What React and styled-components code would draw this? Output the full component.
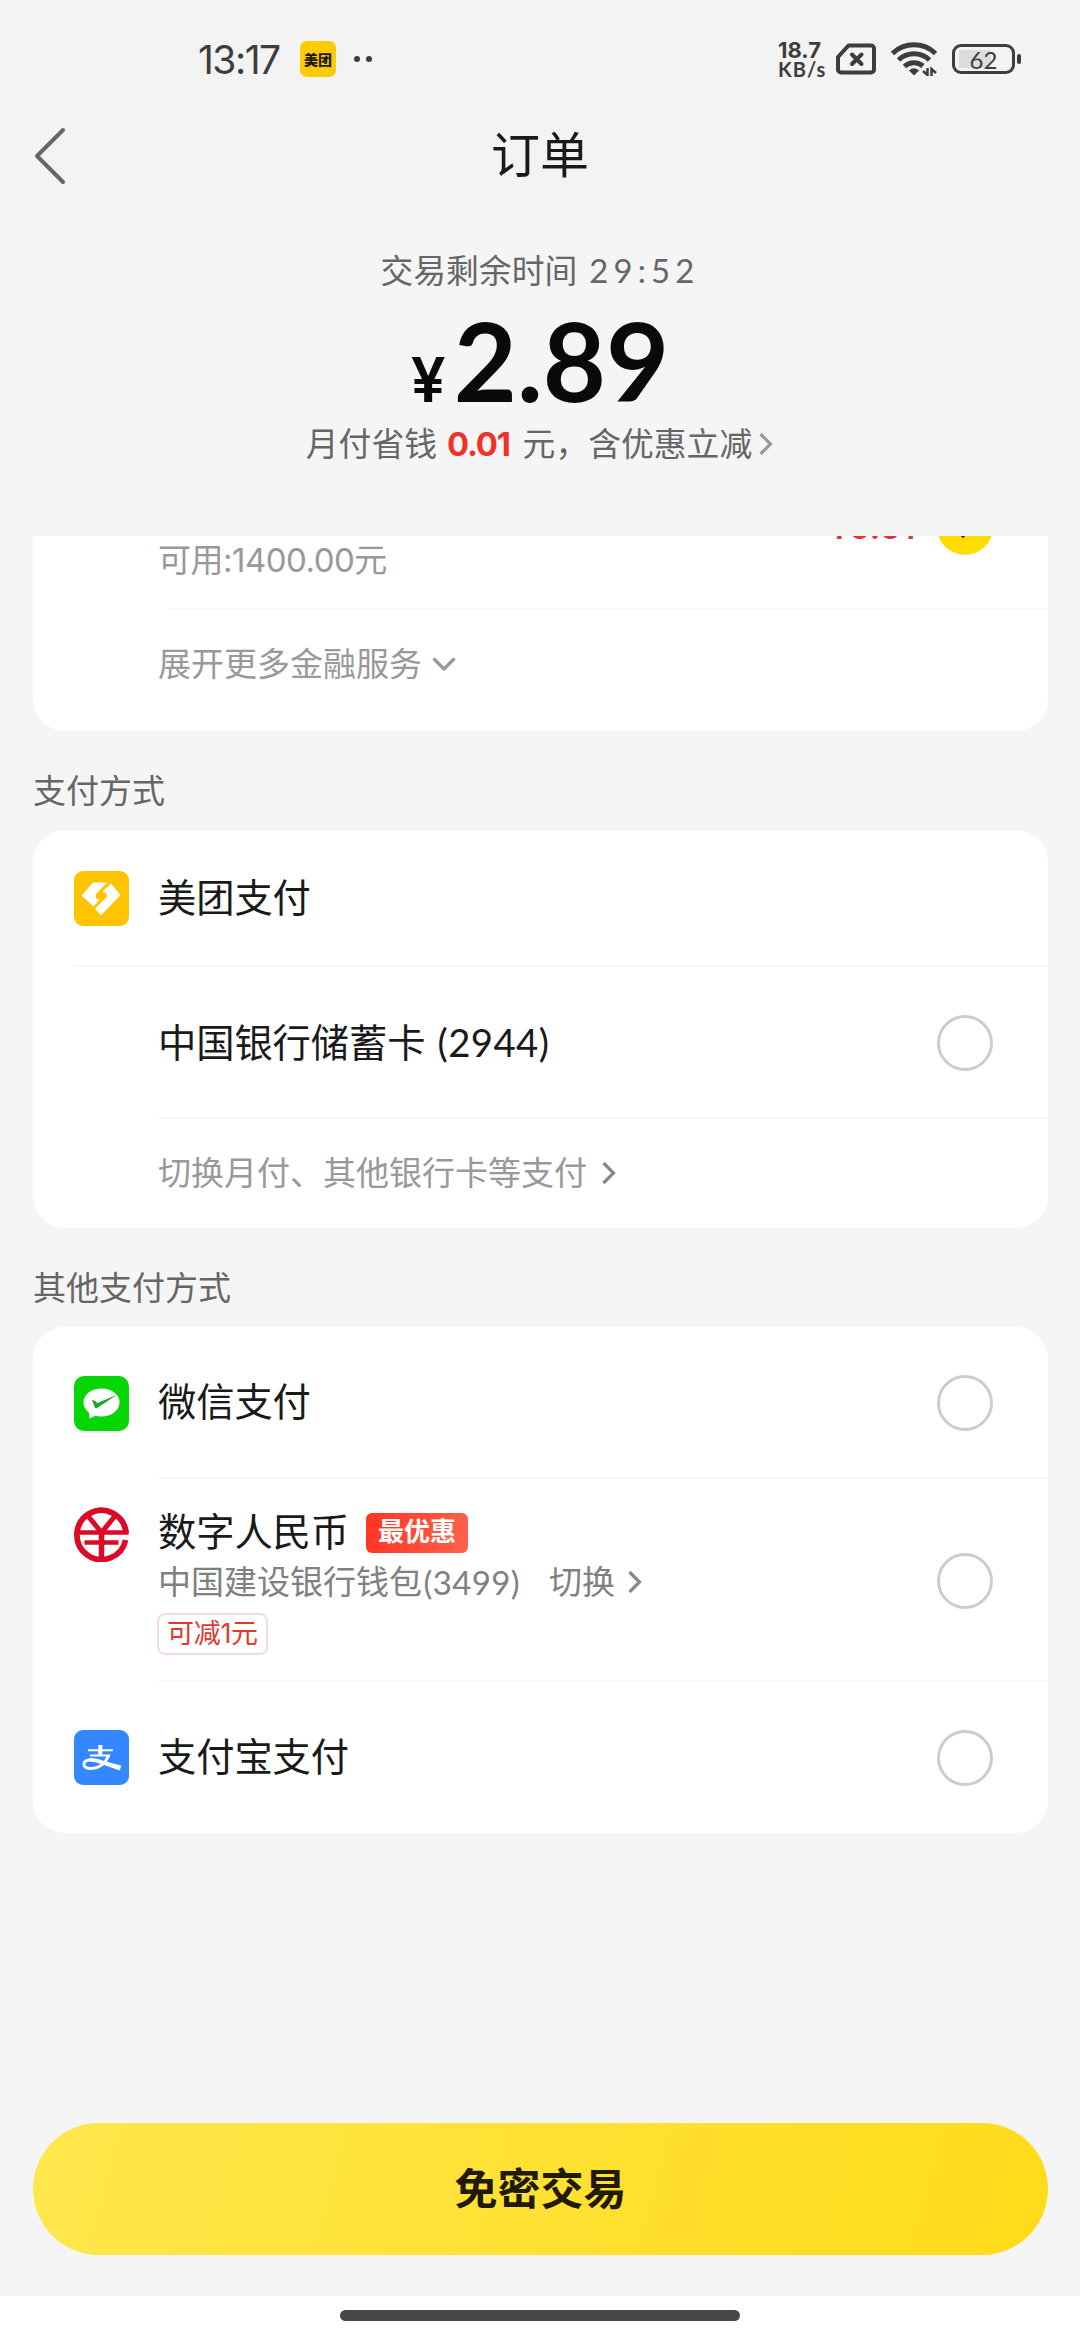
import React, { useState } from 'react';
import styled, { createGlobalStyle, css } from 'styled-components';

const GlobalStyle = createGlobalStyle`
  body {
    margin: 0;
    background: #f5f5f5;
    font-family: Inter, "Noto Sans CJK SC", sans-serif;
    color: #1a1a1a;
  }

  * {
    box-sizing: border-box;
  }
`;

const Page = styled.div`
  display: flex;
  flex-direction: column;
  width: 1080px;
  height: 2340px;
  overflow: hidden;
  white-space: nowrap;
`;

/* ---------- status bar ---------- */

const StatusBar = styled.div`
  display: flex;
  justify-content: space-between;
  align-items: center;
  height: 118px;
  padding: 0 59px 0 198px;
  background: #f3f3f3;
  color: #3d3d3d;
`;

const StatusGroup = styled.div`
  display: flex;
  align-items: center;
`;

const Clock = styled.span`
  width: 102px;
  font-size: 39px;
  letter-spacing: -1.5px;
`;

const AppBadge = styled.span`
  display: flex;
  align-items: center;
  justify-content: center;
  width: 36px;
  height: 36px;
  border-radius: 7px;
  background: #fccb05;
  color: #241a08;
  font-size: 14px;
  font-weight: 900;
`;

const Dot = styled.span`
  width: 6px;
  height: 6px;
  margin-left: ${({ $gap }) => $gap}px;
  border-radius: 50%;
  background: #3d3d3d;
`;

const NetSpeed = styled.div`
  width: 58px;
  padding-top: 1px;
  font-size: 22px;
  font-weight: 700;
  line-height: 19px;
`;

const SpeedUnit = styled.div`
  font-family: Lato, Inter, sans-serif;
  font-size: 20px;
  line-height: 19px;
  letter-spacing: 1px;
`;

const Battery = styled.div`
  display: flex;
  align-items: center;
  justify-content: center;
  width: 63px;
  height: 30px;
  margin-left: 15px;
  border: 3px solid #3d3d3d;
  border-radius: 9px;
  background: linear-gradient(#dcdcdc, #dcdcdc) 4px center / 32px 18px no-repeat;
  font-family: Lato, sans-serif;
  font-size: 24px;
`;

const BatteryTip = styled.span`
  width: 4px;
  height: 10px;
  margin-left: 2px;
  border-radius: 2px;
  background: #3d3d3d;
`;

/* ---------- header ---------- */

const Header = styled.header`
  display: grid;
  grid-template-columns: 100px 1fr 100px;
  align-items: center;
  height: 106px;
  padding-bottom: 31px;
  background: #f3f3f3;
`;

const BackButton = styled.button`
  display: flex;
  padding: 0 0 0 32px;
  border: none;
  background: none;
`;

const Title = styled.h1`
  margin: 0;
  font-size: 49px;
  line-height: 60px;
  font-weight: 400;
  text-align: center;
`;

/* ---------- amount ---------- */

const Summary = styled.section`
  display: flex;
  flex-direction: column;
  align-items: center;
  height: 312px;
  padding-top: 27px;
  color: #666;
  font-size: 32.8px;
  line-height: 40px;
`;

const Countdown = styled.div`
  display: flex;
  gap: 12px;
`;

const Time = styled.span`
  font-family: Lato, sans-serif;
  letter-spacing: 5.2px;
`;

const Amount = styled.div`
  display: flex;
  align-items: baseline;
  height: 132px;
  padding-top: 6px;
  color: #0a0a0a;
  font-family: Lato, sans-serif;
  font-weight: 700;
  font-size: 109px;
  line-height: 126px;
`;

const Currency = styled.span`
  margin-right: 12px;
  font-family: Inter, sans-serif;
  font-size: 62px;
  font-weight: 600;
  line-height: 60px;
  letter-spacing: -4px;
`;

const SavingLine = styled.div`
  display: flex;
  align-items: center;
  padding-top: 1px;
`;

const Saving = styled.b`
  margin: 0 13px 0 10px;
  color: #f03328;
  letter-spacing: -1.2px;
`;

/* digits inside Chinese labels */
const Digits = styled.span`
  margin-left: 1.5px;
  font-family: Lato, sans-serif;
  letter-spacing: 0.4px;
`;

/* ---------- payment list ---------- */

const Card = styled.section`
  margin: 0 32px 0 33px;
  border-radius: ${({ $scrolled }) => ($scrolled ? '0 0 32px 32px' : '32px')};
  background: #fff;
  overflow: hidden;
`;

const SectionTitle = styled.h2`
  height: ${({ $height }) => $height}px;
  margin: 0;
  padding: 40px 0 0 33px;
  color: #666;
  font-size: 33px;
  line-height: 40px;
  font-weight: 400;
`;

const Row = styled.div`
  display: grid;
  grid-template-columns: 84px 1fr 56px;
  align-items: center;
  height: ${({ $height }) => $height}px;
  padding: 0 55px 0 41px;
  ${({ $divider }) =>
    $divider &&
    css`
      background: linear-gradient(#f8f8f8, #f8f8f8) ${$divider}px bottom / 100% 2px no-repeat;
    `}
`;

const ScrolledRow = styled(Row)`
  grid-template-columns: 84px 1fr auto 56px;
  align-items: start;
`;

const MoreRow = styled(Row)`
  padding-bottom: ${({ $lift = 0 }) => $lift}px;
`;

const Available = styled.span`
  color: #999;
  font-size: 33px;
  line-height: 48px;
  letter-spacing: -0.5px;
`;

const Discount = styled.span`
  margin: -33px 22px 0 0;
  color: #e0342f;
  font-size: 34px;
  font-weight: 600;
  line-height: 48px;
  letter-spacing: -0.4px;
`;

const Name = styled.span`
  margin-top: -2px;
  font-size: 38.3px;
  line-height: 48px;
  letter-spacing: -0.1px;
`;

const Hint = styled.span`
  display: flex;
  align-items: center;
  margin-top: -2px;
  color: #999;
  font-size: 33px;
  line-height: 40px;
`;

const Radio = styled.span`
  width: 56px;
  height: 56px;
  border: 3px solid #ccc;
  border-radius: 50%;
`;

const CheckedRadio = styled.span`
  display: flex;
  align-items: center;
  justify-content: center;
  width: 56px;
  height: 56px;
  margin-top: -37px;
  border-radius: 50%;
  background: #ffdd00;
`;

const LogoTop = styled.span`
  align-self: start;
  height: 55px;
  margin-top: 28px;
`;

const Details = styled.div`
  display: flex;
  flex-direction: column;
  align-items: flex-start;
  align-self: start;
  padding-top: 31px;
`;

const NameLine = styled.div`
  display: flex;
  align-items: center;
`;

const BestBadge = styled.span`
  height: 40px;
  margin-left: 17px;
  padding: 0 12px;
  border-radius: 6px;
  background: linear-gradient(100deg, #ff3420, #ff6250);
  color: #fff;
  font-size: 26px;
  font-weight: 700;
  line-height: 38px;
`;

const Wallet = styled.div`
  display: flex;
  align-items: center;
  margin-top: 6px;
  color: #808080;
  font-size: 33px;
  line-height: 40px;
`;

const Switch = styled.span`
  display: flex;
  align-items: center;
  margin-left: 29px;
`;

const Coupon = styled.span`
  height: 42px;
  margin: 11px 0 0 -1px;
  padding: 0 8px;
  border: 2px solid #f2dcdc;
  border-radius: 8px;
  color: #e03a2c;
  font-size: 27px;
  line-height: 37px;
  letter-spacing: -0.3px;
`;

/* ---------- footer ---------- */

const Footer = styled.footer`
  margin-top: auto;
  padding: 0 32px 41px 33px;
`;

const PayButton = styled.button`
  display: block;
  width: 100%;
  height: 132px;
  padding: 0;
  border: none;
  border-radius: 66px;
  background: linear-gradient(105deg, #ffe74d, #ffdb19);
  color: #221a00;
  font: 700 43px/132px Inter, "Noto Sans CJK SC", sans-serif;
`;

const HomeArea = styled.div`
  display: flex;
  justify-content: center;
  height: 44px;
  padding-top: 14px;
  background: #fff;
`;

const HomeBar = styled.span`
  width: 400px;
  height: 11px;
  border-radius: 6px;
  background: #484848;
`;

/* ---------- icons ---------- */

const Icon = styled.svg`
  display: block;
  flex: none;
  fill: none;
  margin-left: ${({ $left = 0 }) => $left}px;
`;

const ChevronRight = ({ left, color = '#999', width = 3.2 }) => (
  <Icon $left={left} width="16" height="24" viewBox="0 0 16 24">
    <path d="M2.5 2 12.5 12 2.5 22" stroke={color} strokeWidth={width} />
  </Icon>
);

const ChevronDown = () => (
  <Icon $left={9} width="26" height="18" viewBox="0 0 26 18">
    <path d="M2.5 3.5 13 14 23.5 3.5" stroke="#999" strokeWidth="3.2" />
  </Icon>
);

const BackIcon = () => (
  <Icon width="36" height="60" viewBox="0 0 36 60">
    <path d="M31 4 5 30 31 56" stroke="#666" strokeWidth="4" strokeLinecap="round" strokeLinejoin="round" />
  </Icon>
);

const SimIcon = () => (
  <Icon width="40" height="32" viewBox="0 0 40 32">
    <path d="M12.5 2.5H35a3 3 0 0 1 3 3V26.500a3 3 0 0 1-3 3H5a3 3 0 0 1-3-3V14Z" stroke="#3d3d3d" strokeWidth="4" strokeLinejoin="round" />
    <path d="m16 11.500 9.500 9.500m0-9.500-9.500 9.500" stroke="#3d3d3d" strokeWidth="4" strokeLinecap="round" />
  </Icon>
);

const WifiIcon = () => (
  <Icon $left={15} width="46" height="34" viewBox="0 0 46 34">
    <g stroke="#3d3d3d" strokeWidth="5">
      <path d="M1.500 11.500a31 31 0 0 1 43 0" />
      <path d="M7.500 18a22.500 22.500 0 0 1 31 0" />
      <path d="M13.500 24.500a14 14 0 0 1 18.500-.5" />
    </g>
    <path d="m18 28.500q5-4.500 10 0L23 33.500Z" fill="#3d3d3d" />
    <path d="M36.500 26v7l-4.500-4M40.500 34v-7l4.500 4" stroke="#3d3d3d" strokeWidth="2.500" />
  </Icon>
);

const MeituanLogo = () => (
  <Icon width="55" height="55" viewBox="0 0 55 55">
    <rect width="55" height="55" rx="9" fill="#ffc300" />
    <path
      d="M19 11.500H33L22 23V27L25.500 29 19.500 35.500 7.500 24.500Z M37 12.500 46.500 24 27 44.500 21 37.500 32.500 26.500V22.500L28.500 20.500Z"
      fill="#fff"
    />
  </Icon>
);

const WechatLogo = () => (
  <Icon width="55" height="55" viewBox="0 0 55 55">
    <rect width="55" height="55" rx="10" fill="#06d606" />
    <ellipse cx="27.500" cy="26.500" rx="18" ry="14" fill="#fff" />
    <path d="m15 36 .5 6.500 7.500-3.500Z" fill="#fff" />
    <path d="M18 24q2-.5 5.500 3L43.500 18.500 23 32q-1.500.5-2-.5Z" fill="#18a72a" />
  </Icon>
);

const DigitalYuanLogo = () => (
  <Icon width="55" height="55" viewBox="0 0 55 55">
    <g stroke="#db0a26">
      <path d="M52 25.500A24.600 24.600 0 1 0 51.600 33" strokeWidth="5.800" />
      <path d="M3 25.500H54.700M10.500 35.500H44.500" strokeWidth="4.600" />
      <path d="M14 9 27.500 25.500 41 9" strokeWidth="5" />
      <path d="M27.500 24V52" strokeWidth="5.500" />
    </g>
  </Icon>
);

const AlipayLogo = () => (
  <Icon width="55" height="55" viewBox="0 0 55 55">
    <rect width="55" height="55" rx="9" fill="#3388ff" />
    <g stroke="#fff">
      <path d="M14 20.300H39M16 25.500H36" strokeWidth="2" />
      <path d="M26.300 15V26" strokeWidth="4" />
      <path d="M34.500 25.500C31 35 23 39 16 38.500 8 38 8 30.500 15.500 30" strokeWidth="3" />
      <path d="M15 30C24 28.500 32 35.500 46.500 37.500" strokeWidth="3.600" />
    </g>
    <path d="M31 31.500 47 35.500 45.500 40.500 29 34.500Z" fill="#fff" />
  </Icon>
);

export default function App() {
  const [selected, setSelected] = useState('monthly');
  const select = (id) => () => setSelected(id);

  return (
    <>
      <GlobalStyle />
      <Page>
        <StatusBar>
          <StatusGroup>
            <Clock>13:17</Clock>
            <AppBadge>美团</AppBadge>
            <Dot $gap={18} />
            <Dot $gap={6} />
          </StatusGroup>
          <StatusGroup>
            <NetSpeed>
              18.7
              <SpeedUnit>KB/s</SpeedUnit>
            </NetSpeed>
            <SimIcon />
            <WifiIcon />
            <Battery>62</Battery>
            <BatteryTip />
          </StatusGroup>
        </StatusBar>

        <Header>
          <BackButton>
            <BackIcon />
          </BackButton>
          <Title>订单</Title>
        </Header>

        <Summary>
          <Countdown>
            <span>交易剩余时间</span>
            <Time>29:52</Time>
          </Countdown>
          <Amount>
            <Currency>¥</Currency>
            <span>2.89</span>
          </Amount>
          <SavingLine>
            月付省钱<Saving>0.01</Saving>元，含优惠立减
            <ChevronRight left={6} />
          </SavingLine>
        </Summary>

        {/* card is scrolled under the summary, only its lower part shows */}
        <Card $scrolled>
          <ScrolledRow $height={74} $divider={135} onClick={select('monthly')}>
            <span />
            <Available>可用:1400.00元</Available>
            <Discount>¥0.01</Discount>
            <CheckedRadio>
              <Icon width="30" height="24" viewBox="0 0 30 24">
                <path d="M3 10 13 20 27 4" stroke="#222" strokeWidth="4.500" />
              </Icon>
            </CheckedRadio>
          </ScrolledRow>
          <MoreRow $height={121} $lift={12}>
            <span />
            <Hint>
              展开更多金融服务
              <ChevronDown />
            </Hint>
          </MoreRow>
        </Card>

        <SectionTitle $height={99}>支付方式</SectionTitle>
        <Card>
          <Row $height={137} $divider={40}>
            <MeituanLogo />
            <Name>美团支付</Name>
          </Row>
          <Row $height={152} $divider={125} onClick={select('card')}>
            <span />
            <Name>
              中国银行储蓄卡 <Digits>(2944)</Digits>
            </Name>
            <Radio />
          </Row>
          <MoreRow $height={109}>
            <span />
            <Hint>
              切换月付、其他银行卡等支付
              <ChevronRight left={14} color="#888" />
            </Hint>
          </MoreRow>
        </Card>

        <SectionTitle $height={99}>其他支付方式</SectionTitle>
        <Card>
          <Row $height={152} $divider={125} onClick={select('wechat')}>
            <WechatLogo />
            <Name>微信支付</Name>
            <Radio />
          </Row>
          <Row $height={203} $divider={125} onClick={select('dcep')}>
            <LogoTop>
              <DigitalYuanLogo />
            </LogoTop>
            <Details>
              <NameLine>
                <Name>数字人民币</Name>
                <BestBadge>最优惠</BestBadge>
              </NameLine>
              <Wallet>
                中国建设银行钱包<Digits>(3499)</Digits>
                <Switch>
                  切换
                  <ChevronRight left={12} color="#888" />
                </Switch>
              </Wallet>
              <Coupon>可减1元</Coupon>
            </Details>
            <Radio />
          </Row>
          <Row $height={151} onClick={select('alipay')}>
            <AlipayLogo />
            <Name>支付宝支付</Name>
            <Radio />
          </Row>
        </Card>

        <Footer>
          <PayButton disabled={!selected}>免密交易</PayButton>
        </Footer>
        <HomeArea>
          <HomeBar />
        </HomeArea>
      </Page>
    </>
  );
}
